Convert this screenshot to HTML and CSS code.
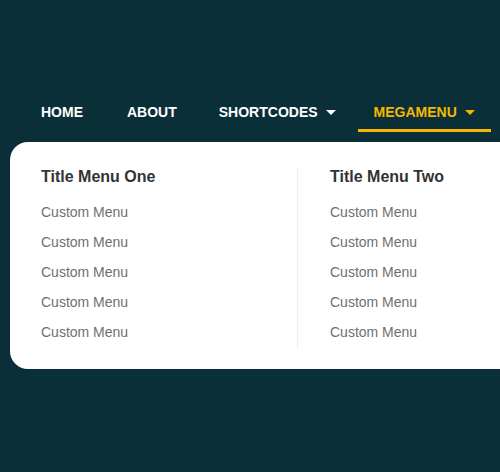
FILE: index.html
```html
<!DOCTYPE html>
<html>
<head>
<meta charset="utf-8">
<link rel="stylesheet" href="styles.css">
</head>
<body>
<nav class="nav">
  <a class="nav-item">HOME</a>
  <a class="nav-item item-about">ABOUT</a>
  <a class="nav-item item-short">SHORTCODES<span class="caret"></span></a>
  <a class="nav-item item-mega active">MEGAMENU<span class="caret"></span></a>
</nav>
<div class="mega">
  <div class="col">
    <h3 class="col-title">Title Menu One</h3>
    <ul class="links">
      <li>Custom Menu</li>
      <li>Custom Menu</li>
      <li>Custom Menu</li>
      <li>Custom Menu</li>
      <li>Custom Menu</li>
    </ul>
  </div>
  <div class="col col-second">
    <h3 class="col-title">Title Menu Two</h3>
    <ul class="links">
      <li>Custom Menu</li>
      <li>Custom Menu</li>
      <li>Custom Menu</li>
      <li>Custom Menu</li>
      <li>Custom Menu</li>
    </ul>
  </div>
</div>
</body>
</html>
```
FILE: styles.css
```css
html {
  overflow: hidden;
  background: #0b2f38;
}
body {
  margin: 0;
  padding-top: 102px;
  width: 500px;
  height: 370px;
  background: #0b2f38;
  font-family: "Liberation Sans", Arial, sans-serif;
}
.nav {
  display: flex;
  padding-left: 25px;
}
.nav-item {
  display: flex;
  align-items: center;
  padding: 0 16px 7px;
  line-height: 20px;
  font-size: 14px;
  font-weight: bold;
  color: #ffffff;
  border-bottom: 3px solid transparent;
}
.item-about {
  margin-left: 12px;
}
.item-short {
  margin-left: 10px;
}
.item-mega {
  margin-left: 6px;
}
.nav-item.active {
  color: #f5b800;
  border-bottom-color: #f5b800;
}
.caret {
  width: 0;
  height: 0;
  margin-left: 8px;
  border-top: 5px solid currentColor;
  border-left: 5px solid transparent;
  border-right: 5px solid transparent;
}
.mega {
  margin: 10px 0 0 10px;
  width: 540px;
  background: #ffffff;
  border-radius: 18px;
  display: flex;
  padding: 25px 0 20px;
  box-sizing: border-box;
}
.col {
  flex: 0 0 287px;
  box-sizing: border-box;
  padding: 0 0 2px 31px;
}
.col-second {
  border-left: 1px solid #eeeeee;
  padding-left: 32px;
}
.col-title {
  margin: 0 0 10px;
  font-size: 16px;
  line-height: 20px;
  font-weight: bold;
  color: #333333;
}
.links {
  list-style: none;
  margin: 0;
  padding: 0;
}
.links li {
  font-size: 14px;
  line-height: 30px;
  color: #6f6f6f;
}
```
